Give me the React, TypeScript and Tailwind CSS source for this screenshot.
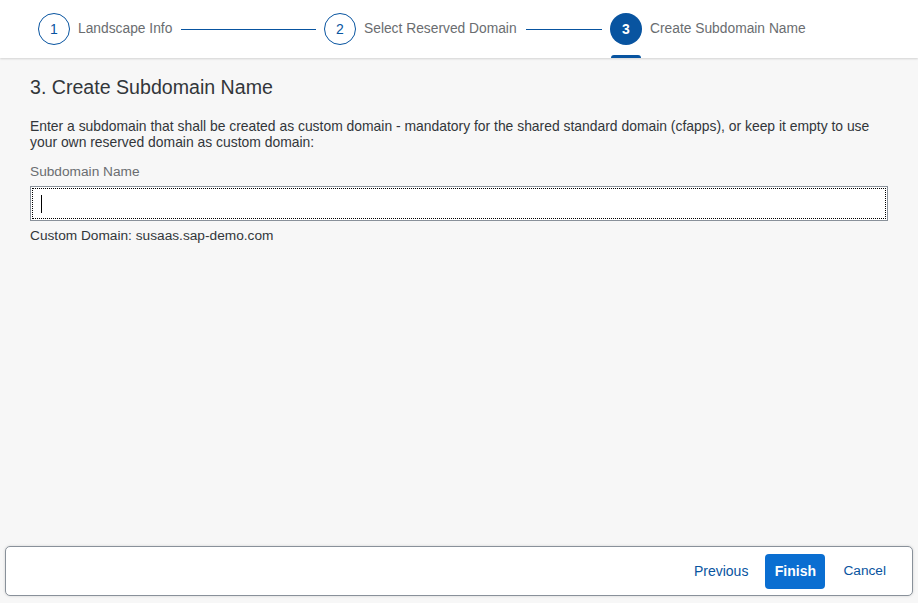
import React from 'react'

const steps = [
  { n: 1, label: 'Landscape Info' },
  { n: 2, label: 'Select Reserved Domain' },
  { n: 3, label: 'Create Subdomain Name', current: true },
]

function Step({ n, label, current, last }: { n: number; label: string; current?: boolean; last?: boolean }) {
  return (
    <div className="relative flex flex-1 items-center h-full">
      {current ? (
        <div className="w-8 h-8 rounded-full bg-[#0854a0] text-white text-sm font-bold flex items-center justify-center shrink-0">
          {n}
        </div>
      ) : (
        <div className="w-8 h-8 rounded-full border border-[#0854a0] text-[#0854a0] text-sm flex items-center justify-center shrink-0">
          {n}
        </div>
      )}
      <span className="ml-2 text-[13.8px] text-[#6a6d70] whitespace-nowrap">{label}</span>
      {!last && <div className="flex-1 h-px bg-[#0854a0] ml-[9px] mr-2"></div>}
      {current && <div className="absolute left-px bottom-0 w-[30px] h-[3px] bg-[#0854a0] rounded-t-sm"></div>}
    </div>
  )
}

export default function App() {
  return (
    <div className="h-screen flex flex-col bg-[#f7f7f7] text-[#32363a]" style={{ fontFamily: '"Liberation Sans", Arial, sans-serif' }}>
      {/* wizard progress */}
      <div className="h-[58px] bg-white flex pl-[38px] pr-[22px] shadow-[0_1px_2px_rgba(0,0,0,0.15)] relative z-10 shrink-0">
        {steps.map((s, i) => (
          <Step key={s.n} {...s} last={i === steps.length - 1} />
        ))}
      </div>

      {/* step content */}
      <div className="flex-1 px-[30px] pt-[17px]">
        <h2 className="text-[19.6px] leading-6">3. Create Subdomain Name</h2>
        <p className="mt-[19px] text-[13.9px] leading-4">
          Enter a subdomain that shall be created as custom domain - mandatory for the shared standard domain (cfapps), or keep it empty to use your own reserved domain as custom domain:
        </p>
        <div className="mt-[14px] text-[13.7px] text-[#6a6d70] leading-4">Subdomain Name</div>
        <div className="mt-[6px] h-[35px] bg-white border border-[#89919a] outline-1 outline-dotted outline-black -outline-offset-3 flex items-center pl-[10px]">
          <span className="w-px h-[18px] bg-black"></span>
        </div>
        <div className="mt-[7px] text-[13.7px] leading-4">Custom Domain: susaas.sap-demo.com</div>
      </div>

      {/* footer */}
      <div className="mx-[5px] mb-[7px] h-[50px] bg-white border border-[#89919a] rounded-[5px] shadow-[0_0_3px_rgba(0,0,0,0.15)] flex items-center justify-end pr-[18px] shrink-0">
        <button className="text-[14px] text-[#0854a0] px-2 h-[35px]">Previous</button>
        <button className="ml-[9px] w-[60px] h-[35px] rounded bg-[#0a6ed1] text-white text-sm font-bold">Finish</button>
        <button className="ml-[10px] text-[13.7px] text-[#0854a0] px-2 h-[35px]">Cancel</button>
      </div>
    </div>
  )
}
